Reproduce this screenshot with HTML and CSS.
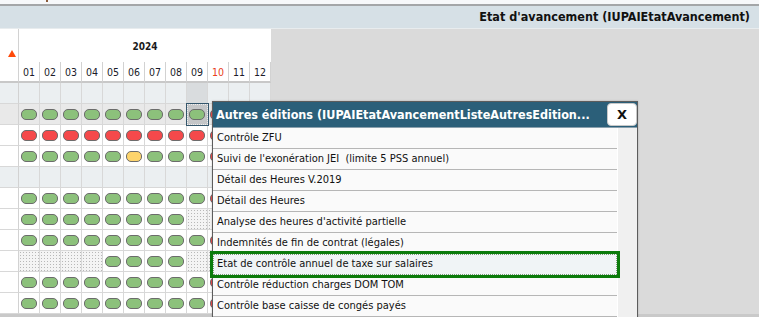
FILE: index.html
```html
<!DOCTYPE html>
<html lang="fr">
<head>
  <meta charset="UTF-8">
  <title>Etat d'avancement</title>
  <link rel="stylesheet" href="styles.css">
</head>
<body>

  <div class="top-strip"><span class="top-mark"></span></div>
  <div class="page-title">Etat d'avancement (IUPAIEtatAvancement)</div>

  <div class="main">
    <div class="planning">
      <div class="corner"><span class="sort-arrow"></span></div>
      <div class="year">2024</div>
      <div class="month">01</div>
      <div class="month">02</div>
      <div class="month">03</div>
      <div class="month">04</div>
      <div class="month">05</div>
      <div class="month">06</div>
      <div class="month">07</div>
      <div class="month">08</div>
      <div class="month">09</div>
      <div class="month current">10</div>
      <div class="month">11</div>
      <div class="month">12</div>
    </div>
    <div class="empty-zone"></div>
  </div>
  <div class="bottom-bar"></div>

  <div class="popup">
    <div class="popup-head">
      <span class="popup-title">Autres éditions (IUPAIEtatAvancementListeAutresEdition...</span>
      <button class="close-btn">X</button>
    </div>
    <div class="popup-body">
      <ul class="edition-list">
        <li>Contrôle ZFU</li>
        <li>Suivi de l'exonération JEI &nbsp;(limite 5 PSS annuel)</li>
        <li>Détail des Heures V.2019</li>
        <li>Détail des Heures</li>
        <li>Analyse des heures d'activité partielle</li>
        <li>Indemnités de fin de contrat (légales)</li>
        <li class="selected">Etat de contrôle annuel de taxe sur salaires</li>
        <li>Contrôle réduction charges DOM TOM</li>
        <li>Contrôle base caisse de congés payés</li>
      </ul>
      <div class="scroll-col"></div>
    </div>
  </div>

  <script>
    // g = vert, r = rouge, y = jaune, d = pointillé, - = vide
    const rows = [
      { cls: "row-blank", cells: "------------", hl: 8 },
      { cls: "row-grey", cells: "gggggggggr--", sel: 8 },
      { cls: "", cells: "rrrrrrrrrr--" },
      { cls: "", cells: "gggggygggr--" },
      { cls: "row-blank", cells: "------------" },
      { cls: "", cells: "gggggggggr--" },
      { cls: "", cells: "ggggggggdd--" },
      { cls: "", cells: "gggggggggr--" },
      { cls: "", cells: "ddddggggdd--" },
      { cls: "", cells: "gggggggggr--" },
      { cls: "", cells: "gggggggggr--" }
    ];
    const planning = document.querySelector(".planning");
    rows.forEach((row) => {
      const head = document.createElement("div");
      head.className = "cell row-head " + row.cls;
      planning.appendChild(head);
      [...row.cells].forEach((c, i) => {
        const cell = document.createElement("div");
        cell.className = "cell " + row.cls;
        if (row.hl === i) cell.classList.add("col-hl");
        if (c === "d") cell.classList.add("dotted");
        if (row.sel === i) cell.classList.add("cell-selected");
        if ("gry".includes(c)) {
          cell.innerHTML = `<span class="pill pill-${c}"></span>`;
        }
        planning.appendChild(cell);
      });
    });
  </script>

</body>
</html>
```

FILE: styles.css
```css
* {
  box-sizing: border-box;
}
body {
  margin: 0;
  font-family: 'DejaVu Sans Condensed', 'DejaVu Sans', sans-serif;
  color: #1a1a1a;
  background: #dadada;
  width: 759px;
  height: 317px;
  overflow: hidden;
  position: relative;
}
.top-strip {
  height: 6px;
  background: #f7f8fa;
  border-bottom: 2px solid #a4a6a8;
  position: relative;
}
.top-mark {
  position: absolute;
  left: 46px;
  top: 0;
  width: 2px;
  height: 2px;
  background: #8a5a3a;
}
.page-title {
  height: 23px;
  background: #d6e0e6;
  border-bottom: 1px solid #e8ecee;
  text-align: right;
  padding-right: 9px;
  font-weight: bold;
  font-size: 12.5px;
  line-height: 21px;
  color: #111;
}
.main {
  display: flex;
  height: 285px;
}
.planning {
  display: grid;
  grid-template-columns: 19px repeat(12, 21px);
  grid-template-rows: 33px 21px repeat(11, 21px);
  background: #fff;
}
.corner {
  grid-row: 1 / span 2;
  border-right: 1px solid #d2d2d2;
  border-bottom: 2px solid #c8c8c8;
  display: flex;
  align-items: flex-end;
  justify-content: flex-end;
  padding: 0 2px 24px 0;
}
.sort-arrow {
  width: 0;
  height: 0;
  border-left: 4px solid transparent;
  border-right: 4px solid transparent;
  border-bottom: 7px solid #ff4a0a;
}
.year {
  grid-column: 2 / span 12;
  text-align: center;
  font-weight: bold;
  font-size: 10px;
  line-height: 33px;
  padding-top: 1px;
}
.month {
  border-right: 1px solid #d2d2d2;
  border-bottom: 2px solid #c8c8c8;
  text-align: center;
  font-size: 10.5px;
  line-height: 21px;
  color: #1c1c2a;
}
.month.current {
  color: #e8401c;
}
.cell {
  border-right: 1px solid #d8d8d8;
  border-bottom: 1px solid #d8d8d8;
  display: flex;
  align-items: center;
  justify-content: center;
  background: #fff;
}
.row-head {
  border-right-color: #d2d2d2;
}
.row-blank {
  background: #ebeff1;
}
.row-blank.col-hl {
  background: #d9dcde;
}
.row-grey {
  background: #e9e9e9;
}
.dotted {
  background-color: #f4f4f4;
  background-image: radial-gradient(#b8b8b8 0.6px, transparent 0.7px);
  background-size: 3px 3px;
}
.cell-selected {
  background: #c4c6c8;
  border: 1px dotted #f0f0f0;
  outline: 1px solid #34566c;
  outline-offset: 0;
  position: relative;
}
.pill {
  width: 16px;
  height: 11px;
  border: 1px solid #6c6c6c;
  border-radius: 5px;
  margin-right: 1px;
}
.pill-g {
  background: #8cc17b;
}
.pill-r {
  background: #f5494b;
}
.pill-y {
  background: #fdd46c;
}
.empty-zone {
  flex: 1;
  background: #dadada;
}
.bottom-bar {
  height: 3px;
  background: #c9c9c9;
}
.popup {
  position: absolute;
  left: 212px;
  top: 101px;
  width: 426px;
  height: 230px;
  border: 1px solid #5c5c5c;
  background: #f0f0f0;
  box-shadow: 0 0 2px rgba(0, 0, 0, 0.2);
}
.popup-head {
  height: 26px;
  background: #2b5f79;
  display: flex;
  align-items: center;
  border-bottom: 1px solid #8aa0ad;
}
.popup-title {
  flex: 1;
  color: #fff;
  font-weight: bold;
  font-size: 12.5px;
  padding-left: 3px;
  white-space: nowrap;
}
.close-btn {
  width: 30px;
  height: 23px;
  margin: 0;
  background: #fff;
  border: 1px solid #c8c8c8;
  border-radius: 4px;
  font-family: 'DejaVu Sans', sans-serif;
  font-weight: bold;
  font-size: 13px;
  color: #111;
  padding: 0;
}
.popup-body {
  display: flex;
}
.edition-list {
  list-style: none;
  margin: 0;
  padding: 0;
  width: 405px;
  background: #fafafa;
  border-right: 1px solid #fff;
}
.edition-list li {
  height: 21px;
  border-bottom: 1px solid #b6b6b6;
  font-size: 11px;
  line-height: 20px;
  padding-left: 4px;
  white-space: nowrap;
  color: #111;
}
.edition-list li.selected {
  background: #f0f4f6;
  border: 1px dotted #7b9a7b;
  outline: 3px solid #0b7b0b;
  outline-offset: 0;
  line-height: 18px;
  padding-left: 3px;
  position: relative;
}
.scroll-col {
  flex: 1;
  background: #f0f0f0;
}
```
